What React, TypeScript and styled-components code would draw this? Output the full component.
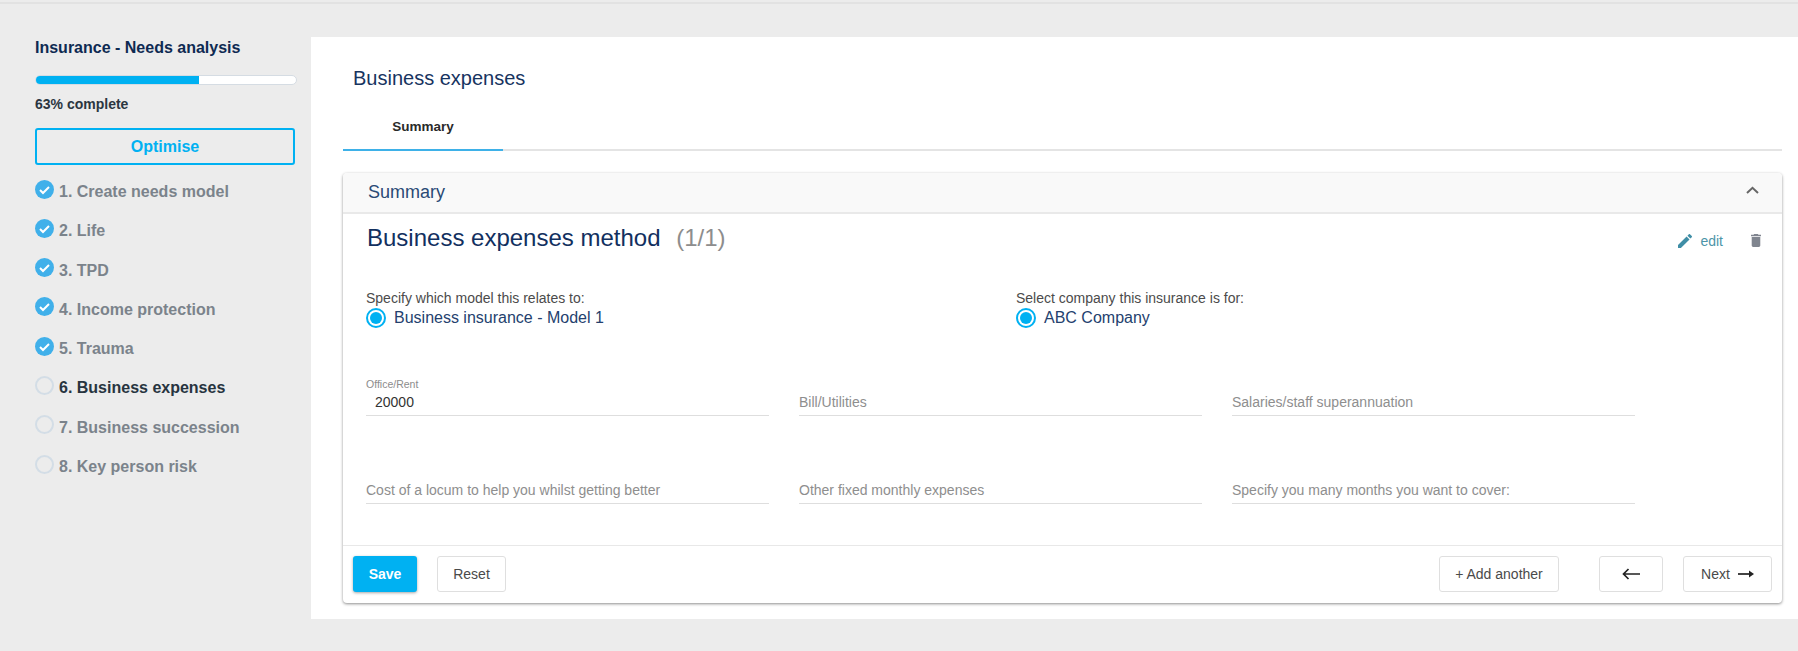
import React from "react";
import styled, { createGlobalStyle } from "styled-components";

const FONT = `"Liberation Sans", Arial, sans-serif`;

const Global = createGlobalStyle`
  html, body { margin: 0; padding: 0; background: #ececec; }
  body { font-family: ${FONT}; }
  * { box-sizing: border-box; }
`;

const Page = styled.div`
  width: 1798px;
  height: 651px;
  background: #ececec;
  border-top: 2px solid #e2e2e2;
  margin-top: 2px;
  padding-top: 33px;
  display: flex;
  align-items: flex-start;
  overflow: hidden;
`;

const Sidebar = styled.aside`
  width: 311px;
  flex: none;
  padding: 0 14px 0 35px;
`;

const SideTitle = styled.div`
  font-size: 16px;
  font-weight: 700;
  color: #0e2a52;
  line-height: 20px;
  margin-top: 1px;
`;

const Track = styled.div`
  width: 262px;
  height: 10px;
  margin-top: 17px;
  border-radius: 5px;
  background: #fff;
  border: 1px solid #d5dce3;
  overflow: hidden;
`;

const Fill = styled.div`
  height: 100%;
  background: #00b1f2;
`;

const Percent = styled.div`
  font-size: 14px;
  font-weight: 700;
  color: #2b3641;
  line-height: 16px;
  margin-top: 11px;
`;

const OptimiseButton = styled.button`
  display: block;
  width: 260px;
  height: 37px;
  margin-top: 16px;
  background: transparent;
  border: 2px solid #00b1f2;
  border-radius: 3px;
  color: #00b1f2;
  font: 700 16px ${FONT};
`;

const Steps = styled.ol`
  list-style: none;
  margin: 16px 0 0;
  padding: 0;
  display: flex;
  flex-direction: column;
  gap: 19.3px;
`;

const Step = styled.li<{ $active?: boolean }>`
  display: flex;
  align-items: center;
  gap: 5px;
  height: 20px;
  padding-top: 2px;
  font-size: 16px;
  font-weight: 700;
  color: ${(p) => (p.$active ? "#27343f" : "#7b838b")};
`;

const Pending = styled.span`
  width: 19px;
  height: 19px;
  flex: none;
  border-radius: 50%;
  border: 2px solid #d3dde6;
  margin-top: -6px;
`;

const DoneIcon = styled.svg`
  width: 19px;
  height: 19px;
  flex: none;
  margin-top: -6px;
`;

const Main = styled.main`
  flex: 1;
  height: 582px;
  background: #fff;
  padding: 0 16px 0 32px;
`;

const PageTitle = styled.h1`
  margin: 29px 0 0 10px;
  font-size: 20px;
  font-weight: 400;
  line-height: 24px;
  color: #17345f;
`;

const Tabs = styled.div`
  margin-top: 7px;
  height: 54px;
  border-bottom: 2px solid #e4e4e4;
`;

const Tab = styled.div`
  width: 160px;
  height: 54px;
  padding-top: 21px;
  border-bottom: 2px solid #3eb1e8;
  text-align: center;
  font-size: 13.5px;
  font-weight: 700;
  color: #2a2a2a;
  line-height: 18px;
`;

const Card = styled.section`
  margin-top: 22px;
  height: 430px;
  background: #fff;
  border-radius: 4px;
  box-shadow: 0 1px 3px rgba(0, 0, 0, 0.45);
  display: flex;
  flex-direction: column;
`;

const CardHeader = styled.header`
  height: 41px;
  flex: none;
  background: #f9f9f9;
  border-bottom: 2px solid #e9e9e9;
  border-radius: 4px 4px 0 0;
  padding: 0 23px 0 25px;
  display: flex;
  align-items: center;
  justify-content: space-between;
  font-size: 18px;
  color: #2a4a75;
`;

const Chevron = styled.svg`
  margin-bottom: 6px;
`;

const CardBody = styled.div`
  flex: 1;
  padding: 0 0 0 23px;
`;

const MethodRow = styled.div`
  display: flex;
  justify-content: space-between;
  align-items: center;
  height: 24px;
  margin-top: 12px;
  padding-right: 21px;
`;

const MethodTitle = styled.h2`
  margin: 0 0 0 1px;
  font-size: 24px;
  font-weight: 400;
  color: #12305f;
`;

const Count = styled.span`
  margin-left: 9px;
  color: #8d8d8d;
`;

const Actions = styled.div`
  display: flex;
  align-items: center;
  padding-top: 5px;
`;

const EditLink = styled.a`
  display: flex;
  align-items: center;
  gap: 8px;
  font-size: 14px;
  color: #4d94a8;
  margin-right: 28px;
`;

const RadioRow = styled.div`
  display: grid;
  grid-template-columns: 650px 1fr;
  margin-top: 39px;
`;

const RadioGroup = styled.div`
  display: flex;
  flex-direction: column;
`;

const RadioLabel = styled.div`
  font-size: 14px;
  line-height: 19px;
  color: #4b4b4b;
`;

const RadioOption = styled.div`
  display: flex;
  align-items: center;
  gap: 8px;
  font-size: 16px;
  line-height: 20px;
  color: #24416e;
`;

const RadioDot = styled.span`
  width: 20px;
  height: 20px;
  flex: none;
  border-radius: 50%;
  border: 2px solid #00b1f2;
  display: flex;
  align-items: center;
  justify-content: center;
  &::after {
    content: "";
    width: 12px;
    height: 12px;
    border-radius: 50%;
    background: #00b1f2;
  }
`;

const FieldGrid = styled.div`
  display: grid;
  grid-template-columns: repeat(3, 403px);
  column-gap: 30px;
  row-gap: 44px;
  margin-top: 44px;
`;

const Field = styled.div`
  height: 44px;
  border-bottom: 1px solid #dedede;
  display: flex;
  flex-direction: column;
  justify-content: flex-end;
  padding-bottom: 3px;
`;

const FloatLabel = styled.div`
  font-size: 10.5px;
  line-height: 12px;
  margin-bottom: 2px;
  color: #8c8c8c;
`;

const FieldValue = styled.div`
  font-size: 14px;
  line-height: 20px;
  padding-left: 9px;
  color: #333;
`;

const Placeholder = styled.div`
  font-size: 14px;
  line-height: 20px;
  color: #8e8e8e;
`;

const CardFooter = styled.footer`
  height: 58px;
  flex: none;
  border-top: 1px solid #e8e8e8;
  padding: 10px 10px 0 10px;
  display: flex;
  align-items: flex-start;
`;

const Button = styled.button`
  height: 36px;
  background: #fff;
  border: 1px solid #dfdfdf;
  border-radius: 3px;
  font: 400 14px ${FONT};
  color: #4a4a4a;
  display: inline-flex;
  align-items: center;
  justify-content: center;
  gap: 8px;
`;

const SaveButton = styled(Button)`
  width: 64px;
  background: #00b1f2;
  border: none;
  color: #fff;
  font-weight: 700;
  box-shadow: 0 1px 3px rgba(0, 0, 0, 0.35);
  margin-right: 20px;
`;

const ResetButton = styled(Button)`
  width: 69px;
`;

const AddButton = styled(Button)`
  width: 120px;
  margin-left: auto;
  margin-right: 40px;
`;

const BackButton = styled(Button)`
  width: 64px;
  margin-right: 20px;
`;

const NextButton = styled(Button)`
  width: 89px;
`;

const Check = () => (
  <DoneIcon viewBox="0 0 19 19">
    <circle cx="9.5" cy="9.5" r="9.5" fill="#40b0ea" />
    <path d="M5 10l3 3 6-6" fill="none" stroke="#fff" strokeWidth="2" />
  </DoneIcon>
);

const LeftArrow = () => (
  <svg width="18" height="12" viewBox="0 0 18 12">
    <path d="M18 6H1.5M6.5 1 1.5 6l5 5" fill="none" stroke="#222" strokeWidth="1.7" />
  </svg>
);

const RightArrow = () => (
  <svg width="16" height="10" viewBox="0 0 16 10">
    <path d="M0 5h13" fill="none" stroke="#222" strokeWidth="1.7" />
    <path d="M11 1.5 16 5l-5 3.5z" fill="#222" />
  </svg>
);

const steps = [
  "1. Create needs model",
  "2. Life",
  "3. TPD",
  "4. Income protection",
  "5. Trauma",
  "6. Business expenses",
  "7. Business succession",
  "8. Key person risk",
];

const fields = [
  { label: "Office/Rent", value: "20000" },
  { label: "Bill/Utilities" },
  { label: "Salaries/staff superannuation" },
  { label: "Cost of a locum to help you whilst getting better" },
  { label: "Other fixed monthly expenses" },
  { label: "Specify you many months you want to cover:" },
];

export default function App() {
  return (
    <>
      <Global />
      <Page>
        <Sidebar>
          <SideTitle>Insurance - Needs analysis</SideTitle>
          <Track>
            <Fill style={{ width: "62.5%" }} />
          </Track>
          <Percent>63% complete</Percent>
          <OptimiseButton>Optimise</OptimiseButton>
          <Steps>
            {steps.map((s, i) => (
              <Step key={s} $active={i === 5}>
                {i < 5 ? <Check /> : <Pending />}
                {s}
              </Step>
            ))}
          </Steps>
        </Sidebar>
        <Main>
          <PageTitle>Business expenses</PageTitle>
          <Tabs>
            <Tab>Summary</Tab>
          </Tabs>
          <Card>
            <CardHeader>
              Summary
              <Chevron width="13" height="8" viewBox="0 0 13 8">
                <path d="M1 7 6.5 1.8 12 7" fill="none" stroke="#666" strokeWidth="2" />
              </Chevron>
            </CardHeader>
            <CardBody>
              <MethodRow>
                <MethodTitle>
                  Business expenses method <Count>(1/1)</Count>
                </MethodTitle>
                <Actions>
                  <EditLink>
                    <svg width="14" height="14" viewBox="3 3 18 18">
                      <path fill="#3f8ea6" d="M3 17.25V21h3.75L17.81 9.94l-3.75-3.75L3 17.25zM20.71 7.04a1 1 0 0 0 0-1.41l-2.34-2.34a1 1 0 0 0-1.41 0l-1.83 1.83 3.75 3.75 1.83-1.83z" />
                    </svg>
                    edit
                  </EditLink>
                  <svg width="10" height="13" viewBox="5 3 14 18">
                    <path fill="#80858f" d="M6 19c0 1.1.9 2 2 2h8c1.1 0 2-.9 2-2V7H6v12zM19 4h-3.5l-1-1h-5l-1 1H5v2h14V4z" />
                  </svg>
                </Actions>
              </MethodRow>
              <RadioRow>
                <RadioGroup>
                  <RadioLabel>Specify which model this relates to:</RadioLabel>
                  <RadioOption>
                    <RadioDot />
                    Business insurance - Model 1
                  </RadioOption>
                </RadioGroup>
                <RadioGroup>
                  <RadioLabel>Select company this insurance is for:</RadioLabel>
                  <RadioOption>
                    <RadioDot />
                    ABC Company
                  </RadioOption>
                </RadioGroup>
              </RadioRow>
              <FieldGrid>
                {fields.map((f) => (
                  <Field key={f.label}>
                    {f.value ? (
                      <>
                        <FloatLabel>{f.label}</FloatLabel>
                        <FieldValue>{f.value}</FieldValue>
                      </>
                    ) : (
                      <Placeholder>{f.label}</Placeholder>
                    )}
                  </Field>
                ))}
              </FieldGrid>
            </CardBody>
            <CardFooter>
              <SaveButton>Save</SaveButton>
              <ResetButton>Reset</ResetButton>
              <AddButton>+ Add another</AddButton>
              <BackButton>
                <LeftArrow />
              </BackButton>
              <NextButton>
                Next <RightArrow />
              </NextButton>
            </CardFooter>
          </Card>
        </Main>
      </Page>
    </>
  );
}
